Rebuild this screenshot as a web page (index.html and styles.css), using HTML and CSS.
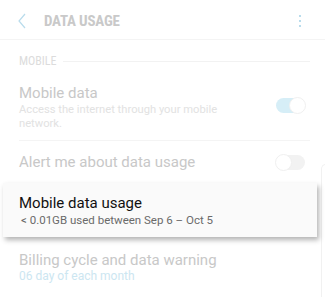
FILE: index.html
```html
<!DOCTYPE html>
<html>
  <head>
    <link rel="stylesheet" href="styles.css">
  </head>
  <body>
    <div class="screen">
      <div class="dim">
        <header class="appbar">
          <svg class="back" width="10" height="16" viewBox="0 0 10 16">
            <path d="M8 1 L2 8 L8 15" fill="none" stroke="#b9dcec" stroke-width="1.2" />
          </svg>
          <div class="title">DATA USAGE</div>
          <div class="more">
            <span></span><span></span><span></span>
          </div>
        </header>

        <div class="section">
          <span class="section-label">MOBILE</span>
          <span class="section-line"></span>
        </div>

        <div class="row row-tall">
          <div class="row-text">
            <div class="row-title">Mobile data</div>
            <div class="row-sub">Access the internet through your mobile network.</div>
          </div>
          <div class="switch on"><span class="thumb"></span></div>
        </div>
        <div class="divider"></div>

        <div class="row">
          <div class="row-text">
            <div class="row-title">Alert me about data usage</div>
          </div>
          <div class="switch"><span class="thumb"></span></div>
        </div>
      </div>

      <!-- highlighted item -->
      <div class="card">
        <div class="card-title">Mobile data usage</div>
        <div class="card-sub">&lt; 0.01GB used between Sep 6 – Oct 5</div>
      </div>

      <div class="dim">
        <div class="row row-bottom">
          <div class="row-text">
            <div class="row-title">Billing cycle and data warning</div>
            <div class="row-sub accent">06 day of each month</div>
          </div>
        </div>
      </div>

      <!-- edge of the panel behind -->
      <div class="panel-edge"></div>
    </div>
  </body>
</html>
```

FILE: styles.css
```css
body {
  margin: 0;
  overflow: hidden;
  background: #fff;
  font-family: Roboto, "Noto Sans", sans-serif;
}

.screen {
  position: relative;
  width: 325px;
  height: 297px;
  display: flex;
  flex-direction: column;
}

/* Header */
.appbar {
  height: 39px;
  display: flex;
  align-items: center;
  border-bottom: 1px solid #f4f4f4;
}

.back {
  margin-left: 17px;
  margin-top: 2px;
}

.title {
  margin-left: 17px;
  margin-top: 2px;
  font-family: "Roboto Condensed", "Liberation Sans Narrow", Roboto, sans-serif;
  font-stretch: condensed;
  font-weight: bold;
  font-size: 15px;
  color: #c9c9c9;
  letter-spacing: -0.2px;
}

.more {
  margin-left: auto;
  margin-right: 24px;
  margin-top: 2px;
  display: flex;
  flex-direction: column;
  gap: 3px;
}

.more span {
  width: 2px;
  height: 2px;
  background: #b9dcec;
}

/* Section */
.section {
  display: flex;
  align-items: center;
  height: 14px;
  padding: 14px 15px 0 19px;
  gap: 6px;
}

.section-label {
  font-family: "Roboto Condensed", "Liberation Sans Narrow", Roboto, sans-serif;
  font-stretch: condensed;
  font-size: 12px;
  line-height: 14px;
  color: #dcdcdc;
}

.section-line {
  flex: 1;
  height: 1px;
  background: #f2f2f2;
}

/* Rows */
.row {
  display: flex;
  align-items: center;
  padding: 0 20px 0 19px;
  height: 42px;
}

.row-tall {
  height: 56px;
  align-items: flex-start;
  padding-top: 16px;
}

.row-text {
  flex: 1;
}

.row-title {
  font-size: 15px;
  color: #c8c8c8;
  line-height: 18px;
}

.row-sub {
  font-size: 11.2px;
  color: #e2e2e2;
  line-height: 13.5px;
  margin-top: 1px;
  width: 215px;
}

.row-sub.accent {
  font-size: 12px;
  line-height: 14px;
  color: #cce6f1;
  width: auto;
  margin-top: 0;
}

.row-bottom {
  height: 46px;
  align-items: flex-start;
  padding-top: 14px;
}

.divider {
  height: 1px;
  margin: 0 15px 0 19px;
  background: #f4f4f4;
}

/* Switch */
.switch {
  position: relative;
  width: 29px;
  height: 15px;
  border-radius: 8px;
  background: #f2f2f2;
}

.row-tall .switch {
  margin-top: 14px;
}

.switch.on {
  background: #d6eef7;
}

.thumb {
  position: absolute;
  top: -1px;
  left: -1px;
  width: 15px;
  height: 15px;
  border-radius: 50%;
  background: #fff;
  border: 1px solid #f0f0f0;
}

.switch.on .thumb {
  left: auto;
  right: -1px;
}

/* Highlighted card */
.card {
  margin: 0 8px 0 3px;
  height: 54px;
  box-sizing: border-box;
  padding: 11px 16px 0 16px;
  background: #fafafa;
  box-shadow: 2px 3px 5px rgba(0, 0, 0, 0.3);
  position: relative;
  z-index: 1;
}

.card-title {
  font-size: 15px;
  color: #111;
  line-height: 18px;
}

.card-sub {
  font-size: 11.5px;
  color: #6a6a6a;
  line-height: 13px;
  margin-top: 2px;
  margin-left: 2px;
}

.panel-edge {
  position: absolute;
  left: 321px;
  top: 164px;
  width: 10px;
  height: 140px;
  border-left: 1px solid #f1f1f1;
  border-top: 1px solid #f1f1f1;
  border-top-left-radius: 5px;
}
```
